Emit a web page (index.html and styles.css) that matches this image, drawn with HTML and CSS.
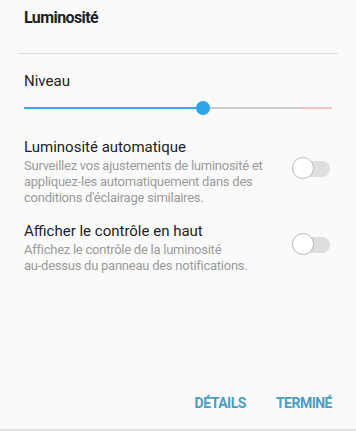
FILE: index.html
```html
<html>
<head>
<title>Luminosité</title>
<meta name="viewport" content="width=device-width, initial-scale=1">
<link rel="stylesheet" href="styles.css">
</head>
<body>

<div class="dialogue">
	<div class="titre">Luminosité</div>

	<div class="niveau">
		<div class="libelle">Niveau</div>
		<div class="curseur">
			<div class="piste">
				<div class="rempli"></div>
				<div class="reste"></div>
				<div class="limite"></div>
			</div>
			<div class="pouce"></div>
		</div>
	</div>

	<div class="option">
		<div class="texte">
			<div class="nom">Luminosité automatique</div>
			<div class="desc">Surveillez vos ajustements de luminosité et<br>appliquez-les automatiquement dans des<br>conditions d'éclairage similaires.</div>
		</div>
		<div class="interrupteur"><span class="bouton"></span></div>
	</div>

	<div class="option">
		<div class="texte">
			<div class="nom">Afficher le contrôle en haut</div>
			<div class="desc">Affichez le contrôle de la luminosité<br>au-dessus du panneau des notifications.</div>
		</div>
		<div class="interrupteur"><span class="bouton"></span></div>
	</div>

	<div class="actions">
		<span class="action">DÉTAILS</span>
		<span class="action">TERMINÉ</span>
	</div>
</div>

</body>
</html>
```

FILE: styles.css
```css
	body{
		margin: 0;
		background: #fafafa;
		font-family: "Roboto", "Liberation Sans", sans-serif;
		color: #222;
	}

	.dialogue{
		height: 429px;
		border-bottom: solid 2px #e2e2e2;
		display: flex;
		flex-direction: column;
	}

	.titre{
		margin: 0 18px;
		padding: 8px 6px 0;
		height: 45px;
		border-bottom: solid 1px #dcdcdc;
		font-size: 16px;
		font-weight: bold;
		letter-spacing: -0.6px;
	}

	.niveau{
		padding: 17px 24px 0;
	}

	.libelle{
		font-size: 15px;
		line-height: 20px;
	}

	.curseur{
		position: relative;
		margin-top: 16px;
		height: 2px;
	}

	.piste{
		display: flex;
		height: 2px;
	}

	.rempli{
		width: 179px;
		background: #3aa7dd;
	}

	.reste{
		width: 99px;
		background: #c9cccd;
	}

	.limite{
		width: 30px;
		background: #f3c4c0;
	}

	.pouce{
		position: absolute;
		left: 172px;
		top: -6px;
		width: 14px;
		height: 14px;
		border-radius: 50%;
		background: #2ea4e8;
	}

	.option{
		display: flex;
		align-items: center;
		padding: 0 26px 0 24px;
		margin-top: 27px;
	}

	.option + .option{
		margin-top: 14px;
	}

	.texte{
		flex: 1;
	}

	.nom{
		font-size: 15px;
		line-height: 22px;
	}

	.desc{
		font-size: 13px;
		line-height: 16px;
		letter-spacing: -0.25px;
		color: #9b9b9b;
		white-space: nowrap;
	}

	.interrupteur{
		position: relative;
		margin-bottom: 4px;
		width: 38px;
		height: 16px;
		border-radius: 8px;
		background: #dedede;
	}

	.bouton{
		position: absolute;
		left: 0;
		top: -4px;
		width: 20px;
		height: 20px;
		border-radius: 50%;
		background: #fff;
		border: solid 1px #bdbdbd;
	}

	.actions{
		margin-top: auto;
		display: flex;
		justify-content: flex-end;
		gap: 30px;
		padding: 0 24px 18px;
	}

	.action{
		font-size: 14px;
		font-weight: bold;
		color: #4b9dc4;
		letter-spacing: -0.5px;
	}
```
